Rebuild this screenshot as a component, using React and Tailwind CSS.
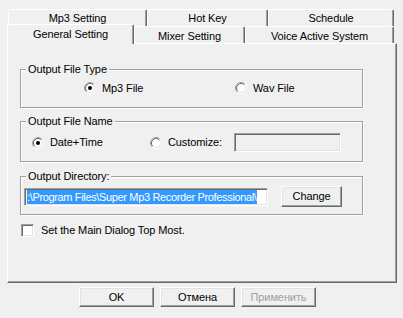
import React from "react";

function Radio({ checked }) {
  return (
    <svg width="12" height="12" viewBox="0 0 12 12" className="shrink-0">
      <circle cx="6" cy="6" r="4.2" fill="#fff" />
      <path d="M2.11 9.89 A5.5 5.5 0 0 1 9.89 2.11" fill="none" stroke="#a0a0a0" strokeWidth="1" />
      <path d="M9.89 2.11 A5.5 5.5 0 0 1 2.11 9.89" fill="none" stroke="#ffffff" strokeWidth="1" />
      <path d="M2.82 9.18 A4.5 4.5 0 0 1 9.18 2.82" fill="none" stroke="#696969" strokeWidth="1" />
      <path d="M9.18 2.82 A4.5 4.5 0 0 1 2.82 9.18" fill="none" stroke="#e3e3e3" strokeWidth="1" />
      {checked && <circle cx="6" cy="6" r="2" fill="#000" />}
    </svg>
  );
}

function RadioItem({ checked, label, className = "" }) {
  return (
    <div className={"flex items-center gap-[6px] " + className}>
      <Radio checked={checked} />
      <span>{label}</span>
    </div>
  );
}

function Group({ label, className = "", children }) {
  return (
    <div
      className={
        "border border-[#a0a0a0] shadow-[inset_1px_1px_0_#ffffff,1px_1px_0_#ffffff] " +
        className
      }
    >
      <div className="-mt-[7px] ml-[5px] px-[2px] w-fit bg-[#f0f0f0] leading-[13px]">{label}</div>
      {children}
    </div>
  );
}

function Button({ children, disabled, className = "" }) {
  return (
    <div
      className={
        "flex items-center justify-center border-t border-l border-white border-b border-r border-b-[#696969] border-r-[#696969] shadow-[inset_-1px_-1px_0_#a0a0a0,inset_1px_1px_0_#e3e3e3] bg-[#f0f0f0] " +
        (disabled ? "text-[#a0a0a0] " : "text-black ") +
        className
      }
    >
      {children}
    </div>
  );
}

function TabBack({ label, className = "" }) {
  return (
    <div
      className={
        "flex items-center justify-center h-[17px] border-t border-l border-white border-r border-r-[#696969] shadow-[inset_-1px_0_0_#a0a0a0] rounded-t-[2px] bg-[#f0f0f0] " +
        className
      }
    >
      {label}
    </div>
  );
}

export default function App() {
  return (
    <div className="w-[403px] h-[318px] overflow-hidden bg-[#f0f0f0] text-black text-[11px] leading-[13px] tracking-[-0.1px] font-['Liberation_Sans',Arial,sans-serif]">
      <div className="pl-[7px] pt-[9px]">
        {/* back tab row */}
        <div className="flex ml-[1px]">
          <TabBack label="Mp3 Setting" className="w-[139px]" />
          <TabBack label="Hot Key" className="w-[121px]" />
          <TabBack label="Schedule" className="w-[126px]" />
        </div>
        {/* front tab row */}
        <div className="flex items-end h-[17px]">
          <div className="relative z-10 w-[127px] h-[20px] -mb-[1px] flex items-center justify-center pb-[1px] border-t border-l border-white border-r border-r-[#696969] shadow-[inset_-1px_0_0_#a0a0a0] rounded-t-[2px] bg-[#f0f0f0]">
            General Setting
          </div>
          <TabBack label="Mixer Setting" className="w-[111px] pt-[2px]" />
          <TabBack label="Voice Active System" className="w-[149px] pt-[2px]" />
        </div>
        {/* panel */}
        <div className="w-[390px] h-[240px] border-t border-l border-white border-r border-b border-r-[#696969] border-b-[#696969] shadow-[inset_-1px_-1px_0_#a0a0a0] flex flex-col">
          <Group label="Output File Type" className="ml-[12px] mt-[25px] w-[343px] h-[39px]">
            <div className="flex items-center h-[14px] mt-[5px]">
              <RadioItem checked label="Mp3 File" className="ml-[63px] w-[151px]" />
              <RadioItem label="Wav File" />
            </div>
          </Group>

          <Group label="Output File Name" className="ml-[12px] mt-[13px] w-[343px] h-[41px]">
            <div className="flex items-center h-[19px] mt-[5px]">
              <RadioItem checked label="Date+Time" className="ml-[11px] w-[118px]" />
              <RadioItem label="Customize:" className="w-[84px]" />
              <div className="w-[107px] h-[19px] border-t border-l border-[#a0a0a0] border-b border-r border-b-white border-r-white shadow-[inset_1px_1px_0_#696969,inset_-1px_-1px_0_#e3e3e3] bg-[#f0f0f0]" />
            </div>
          </Group>

          <Group label="Output Directory:" className="ml-[12px] mt-[14px] w-[343px] h-[39px]">
            <div className="flex items-center h-[21px] mt-[3px]">
              <div className="ml-[3px] w-[244px] h-[18px] flex items-center overflow-hidden whitespace-nowrap pl-[2px] border-t border-l border-[#a0a0a0] border-b border-r border-b-white border-r-white shadow-[inset_1px_1px_0_#696969,inset_-1px_-1px_0_#e3e3e3] bg-white">
                <span className="bg-[#3399ff] text-white leading-[14px] tracking-[-0.35px]">
                  :\Program Files\Super Mp3 Recorder Professional\
                </span>
              </div>
              <Button className="ml-[13px] w-[61px] h-[21px]">Change</Button>
            </div>
          </Group>

          <div className="flex items-center gap-[7px] ml-[13px] mt-[9px] h-[13px]">
            <div className="w-[13px] h-[13px] shrink-0 border-t border-l border-[#a0a0a0] border-b border-r border-b-white border-r-white shadow-[inset_1px_1px_0_#696969,inset_-1px_-1px_0_#e3e3e3] bg-white" />
            <span>Set the Main Dialog Top Most.</span>
          </div>
        </div>
      </div>

      <div className="flex gap-[6px] ml-[79px] mt-[4px]">
        <Button className="w-[75px] h-[20px]">OK</Button>
        <Button className="w-[75px] h-[20px]">Отмена</Button>
        <Button disabled className="w-[75px] h-[20px]">Применить</Button>
      </div>
    </div>
  );
}
